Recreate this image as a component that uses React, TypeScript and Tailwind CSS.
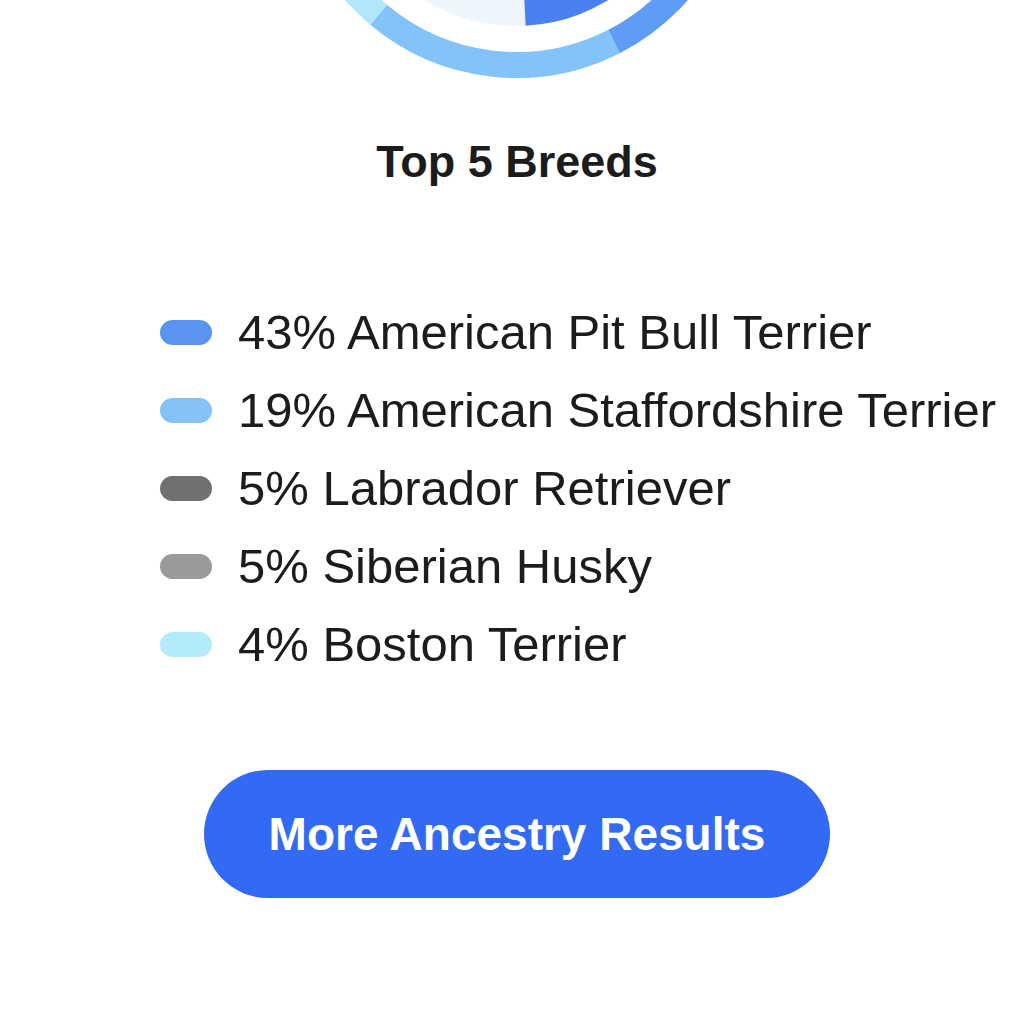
import React from "react";

const cx = 516.5;
const cy = -149.5;

const pt = (r: number, a: number) => {
  const rad = (a * Math.PI) / 180;
  return [cx + r * Math.cos(rad), cy + r * Math.sin(rad)];
};

const arc = (r: number, a0: number, a1: number) => {
  const [x0, y0] = pt(r, a0);
  const [x1, y1] = pt(r, a1);
  const large = a1 - a0 > 180 ? 1 : 0;
  return `M ${x0} ${y0} A ${r} ${r} 0 ${large} 1 ${x1} ${y1}`;
};

const sector = (r: number, a0: number, a1: number) => {
  const [x0, y0] = pt(r, a0);
  const [x1, y1] = pt(r, a1);
  const large = a1 - a0 > 180 ? 1 : 0;
  return `M ${cx} ${cy} L ${x0} ${y0} A ${r} ${r} 0 ${large} 1 ${x1} ${y1} Z`;
};

const ring = [
  { from: -92, to: 63, color: "#5f9cf5" },
  { from: 63, to: 130, color: "#84c2fa" },
  { from: 130, to: 145, color: "#b2e7fb" },
  { from: 145, to: 163, color: "#9a9a9a" },
  { from: 163, to: 181, color: "#707070" },
  { from: 181, to: 268, color: "#dfe9f7" },
];

const breeds = [
  { label: "43% American Pit Bull Terrier", color: "bg-[#5b93f0]" },
  { label: "19% American Staffordshire Terrier", color: "bg-[#85c2f8]" },
  { label: "5% Labrador Retriever", color: "bg-[#707070]" },
  { label: "5% Siberian Husky", color: "bg-[#9a9a9a]" },
  { label: "4% Boston Terrier", color: "bg-[#b4ebfa]" },
];

const Donut = () => {
  return (
    <svg width="1028" height="100" viewBox="0 0 1028 100" className="block">
      <circle cx={cx} cy={cy} r={175.5} fill="#eef5fd" />
      <path d={sector(175.5, -60, 87)} fill="#4a80f0" />
      {ring.map((seg) => (
        <path
          key={seg.from}
          d={arc(214.5, seg.from, seg.to)}
          fill="none"
          stroke={seg.color}
          strokeWidth={26}
        />
      ))}
    </svg>
  );
};

export default function App() {
  return (
    <div className="w-[1028px] h-[1028px] bg-white overflow-hidden font-['Liberation_Sans',Arial,sans-serif] text-[#1c1c1c]">
      <Donut />

      <h2 className="mt-[35px] pl-[6px] text-center text-[45px] leading-[54px] font-bold">
        Top 5 Breeds
      </h2>

      <ul className="mt-[104px] pl-[160px] flex flex-col">
        {breeds.map((breed) => (
          <li key={breed.label} className="flex items-center h-[78px]">
            <span className={`w-[52px] h-[25px] rounded-full shrink-0 ${breed.color}`} />
            <span className="ml-[26px] text-[49px] leading-[78px] whitespace-nowrap">
              {breed.label}
            </span>
          </li>
        ))}
      </ul>

      <div className="mt-[87px] pl-[6px] flex justify-center">
        <button className="w-[626px] h-[128px] rounded-full bg-[#336af3] text-white text-[46px] font-bold">
          More Ancestry Results
        </button>
      </div>
    </div>
  );
}
